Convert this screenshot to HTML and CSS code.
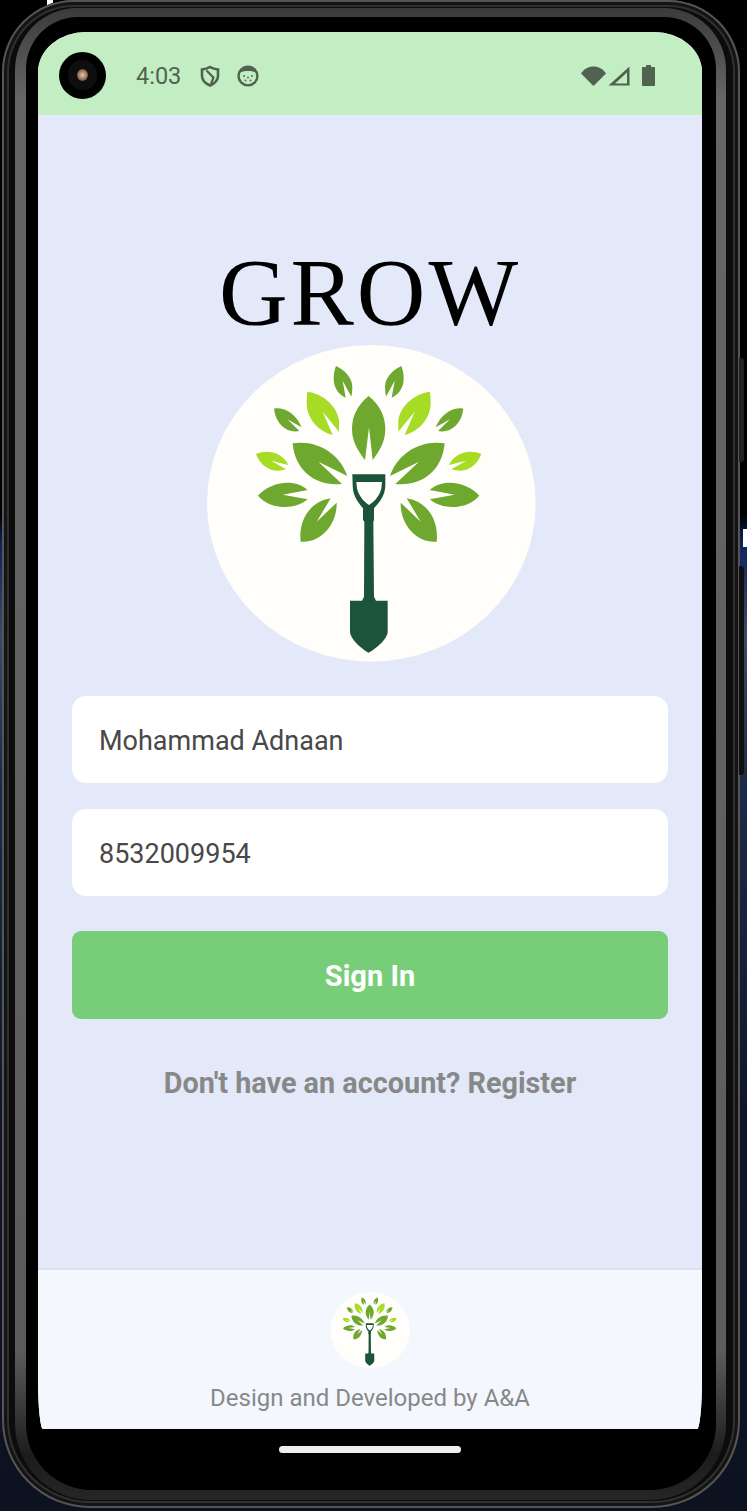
FILE: index.html
```html
<!DOCTYPE html>
<html lang="en">
<head>
    <meta charset="UTF-8">
    <meta name="viewport" content="width=device-width, initial-scale=1.0">
    <title>Grow - Sign In</title>
    <link rel="stylesheet" href="styles.css">
</head>
<body>

<!-- Logo, drawn once and reused in the footer -->
<svg class="defs" width="0" height="0" aria-hidden="true">
    <symbol id="growLogo" viewBox="0 0 1020 990" preserveAspectRatio="none">
        <ellipse cx="514" cy="490" rx="493" ry="475" fill="#fffefa"/>
        <g id="leavesLeft">
            <path class="leaf" d="M408 78C435 90 457 115 457 140C457 150 456 160 454 170L428 122L437 173C415 165 400 140 401 115C401 100 404 88 408 78Z"/>
            <path class="leaf-light" d="M322 155C365 160 410 195 417 240L417 275L368 215L398 285C355 275 320 235 320 190C320 175 321 165 322 155Z"/>
            <path class="leaf" d="M222 206C255 198 290 225 305 262L262 238L298 273C262 280 228 255 222 206Z"/>
            <path class="leaf" d="M278 310C350 298 420 340 442 408L355 365L426 432C350 440 285 395 278 310Z"/>
            <path class="leaf-light" d="M168 342C205 325 250 340 265 375L213 362L258 388C220 400 185 385 168 342Z"/>
            <path class="leaf" d="M174 467C205 430 280 410 323 450L248 464L323 478C280 515 205 505 174 467Z"/>
            <path class="leaf" d="M392 475L350 545L410 488C412 550 365 610 302 605C295 540 330 485 392 475Z"/>
        </g>
        <use href="#leavesLeft" transform="translate(1012 0) scale(-1 1)"/>
        <path class="leaf" d="M506 168C540 195 556 230 556 268C556 305 538 335 518 360L507 262L495 360C475 335 456 305 456 268C456 230 472 195 506 168Z"/>
        <path fill="#1c5439" fill-rule="evenodd" d="M457 403H556V435C556 465 540 485 522 505V540L520 545L522 770L528 782H563V875C563 895 530 925 506 938C482 925 450 895 450 875V782H486L492 770L493 545L489 540V505C472 485 458 465 458 435ZM469 426H546L544 445C540 465 525 485 507 495C490 485 475 465 471 445Z"/>
    </symbol>
</svg>

<div class="device">
    <span class="side-btn side-btn-power"></span>
    <span class="side-btn side-btn-volume"></span>

    <div class="ring">
        <div class="bezel">
            <div class="screen">

                <!-- Barra de status -->
                <header class="status-bar">
                    <span class="camera"><span class="lens"></span></span>
                    <span class="clock">4:03</span>
                    <svg class="icon-shield" viewBox="0 0 20 22">
                        <path d="M10 2C12.500 3.500 15 4.200 18 4.500V11C18 15.500 14.500 18.500 10 20.500C5.500 18.500 2 15.500 2 11V4.500C5 4.200 7.500 3.500 10 2Z" fill="none" stroke="#4f6350" stroke-width="2.600"/>
                        <path d="M6.500 5.500L13.500 12.500L11 19" fill="none" stroke="#4f6350" stroke-width="2.200"/>
                    </svg>
                    <svg class="icon-face" viewBox="0 0 22 22">
                        <circle cx="11" cy="11" r="9.400" fill="none" stroke="#4f6350" stroke-width="2.400"/>
                        <path d="M3.500 7.500C4.500 3.500 7.500 1.500 11 1.500C14.500 1.500 17.500 3.500 18.500 7.500C16 6.300 14 6 11 6C8 6 6 6.300 3.500 7.500Z" fill="#4f6350"/>
                        <circle cx="7" cy="11" r=".9" fill="#4f6350"/>
                        <circle cx="11" cy="12.500" r=".9" fill="#4f6350"/>
                        <circle cx="15" cy="11" r=".9" fill="#4f6350"/>
                        <circle cx="8.500" cy="15.500" r=".9" fill="#4f6350"/>
                        <circle cx="13.500" cy="15.500" r=".9" fill="#4f6350"/>
                    </svg>
                    <span class="status-right">
                        <svg class="icon-wifi" viewBox="0 0 25 20">
                            <path d="M0 7.500C3 3 7.500 .5 12.500 .5C17.500 .5 22 3 25 7.500L12.500 20Z" fill="#4f6350"/>
                        </svg>
                        <svg class="icon-signal" viewBox="0 0 22 20">
                            <path d="M21.500 .5V19.500H.5ZM19 6.500L7 17.500H19Z" fill="#4f6350" fill-rule="evenodd"/>
                        </svg>
                        <svg class="icon-battery" viewBox="0 0 13 21">
                            <path d="M4 0H9V2H12C12.600 2 13 2.400 13 3V20C13 20.600 12.600 21 12 21H1C.4 21 0 20.600 0 20V3C0 2.400 .4 2 1 2H4Z" fill="#4f6350"/>
                        </svg>
                    </span>
                </header>

                <!-- Formulario de login -->
                <main class="login">
                    <h1 class="brand">GROW</h1>
                    <svg class="logo"><use href="#growLogo"/></svg>

                    <div class="field">Mohammad Adnaan</div>
                    <div class="field field-phone">8532009954</div>
                    <button class="btn-signin">Sign In</button>
                    <a class="register-link" href="#">Don't have an account? Register</a>
                </main>

                <footer class="app-footer">
                    <svg class="footer-logo"><use href="#growLogo"/></svg>
                    <p class="credit">Design and Developed by A&amp;A</p>
                </footer>
            </div>

            <div class="home-area"><span class="home-bar"></span></div>
        </div>
    </div>
</div>

</body>
</html>
```

FILE: styles.css
```css
/* Estilos globais */
* {
    margin: 0;
    padding: 0;
    box-sizing: border-box;
}

body {
    width: 747px;
    height: 1511px;
    overflow: hidden;
    font-family: 'Roboto', sans-serif;
    background:
        linear-gradient(#fff, #fff) 47px 0 / 6px 6px no-repeat,
        linear-gradient(#fff, #fff) 743px 529px / 4px 18px no-repeat,
        linear-gradient(180deg, #000 0, #000 34%, #10245c 36%, #3c4a68 42%, #1c2a4a 52%, #0e1528 75%, #0c1220 100%);
}

.defs {
    position: absolute;
}

.leaf {
    fill: #6ea82f;
}

.leaf-light {
    fill: #a6dc26;
}

/* Moldura do aparelho */
.device {
    position: relative;
    width: 738px;
    height: 1508px;
    margin-left: 2px;
    padding: 8px 14px 8px 13px;
    background: #0c0c0c;
    border-radius: 72px 72px 88px 88px;
    box-shadow: inset 0 0 0 2px #555, inset 0 0 0 5px #141414, inset 0 0 0 7px #303030;
}

.side-btn {
    position: absolute;
    left: 737px;
    width: 5px;
    background: #222;
    border-radius: 0 3px 3px 0;
}

.side-btn-power {
    top: 358px;
    height: 104px;
}

.side-btn-volume {
    top: 566px;
    height: 209px;
    background: #111;
}

.ring {
    height: 100%;
    padding: 9px 10px 10px 11px;
    background: linear-gradient(180deg, #3a3a3a 0, #666 6%, #5c5c5c 90%, #1c1c1c 97%, #262626 100%);
    border-radius: 62px 62px 76px 76px;
}

.bezel {
    display: flex;
    flex-direction: column;
    height: 100%;
    padding: 15px 14px 0 12px;
    background: #000;
    border-radius: 52px 52px 66px 66px;
}

.screen {
    display: flex;
    flex-direction: column;
    height: 1397px;
    overflow: hidden;
    background: #e3e9f8;
    border-radius: 48px 48px 5px 5px / 40px 40px 50px 50px;
}

/* Barra de status */
.status-bar {
    display: flex;
    align-items: center;
    flex-shrink: 0;
    height: 83px;
    padding: 0 47px 0 21px;
    background: #c3eec3;
    color: #4f6350;
}

.camera {
    display: flex;
    align-items: center;
    justify-content: center;
    width: 47px;
    height: 47px;
    margin-top: 3px;
    background: #000;
    border-radius: 50%;
}

.lens {
    width: 11px;
    height: 12px;
    background: radial-gradient(circle, #e8c8a8 0, #8a6a58 60%, #222 100%);
    border-radius: 50%;
    box-shadow: 0 0 0 9px #0e0e0e;
}

.clock {
    margin-left: 30px;
    margin-top: 5px;
    font-size: 23.5px;
}

.icon-shield {
    width: 20px;
    height: 22px;
    margin-left: 19px;
    margin-top: 4px;
}

.icon-face {
    width: 22px;
    height: 22px;
    margin-left: 17px;
    margin-top: 4px;
}

.status-right {
    display: flex;
    align-items: center;
    margin-left: auto;
    margin-top: 4px;
}

.icon-wifi {
    width: 25px;
    height: 20px;
}

.icon-signal {
    width: 22px;
    height: 20px;
    margin-left: 2px;
}

.icon-battery {
    width: 13px;
    height: 21px;
    margin-left: 12px;
}

/* Formulario */
.login {
    display: flex;
    flex-direction: column;
    align-items: center;
    flex: 1;
    padding: 133px 34px 0;
}

.brand {
    font-family: 'Liberation Serif', serif;
    font-size: 95px;
    font-weight: 400;
    line-height: 90px;
    letter-spacing: 3px;
    color: #000;
}

.logo {
    width: 340px;
    height: 330px;
    margin: 2px 0 0 -1px;
}

.field {
    display: flex;
    align-items: center;
    width: 100%;
    height: 87px;
    margin-top: 26px;
    padding: 2px 0 0 27px;
    background: #fff;
    border-radius: 14px;
    font-size: 27px;
    color: #484848;
}

.btn-signin {
    width: 100%;
    height: 88px;
    margin-top: 35px;
    padding-top: 2px;
    background: #77cd78;
    border: none;
    border-radius: 9px;
    font-family: 'Roboto', sans-serif;
    font-size: 29px;
    font-weight: 700;
    color: #fff;
}

.register-link {
    margin-top: 47px;
    font-size: 28.8px;
    font-weight: 700;
    color: #888;
    text-decoration: none;
}

/* Rodape */
.app-footer {
    display: flex;
    flex-direction: column;
    align-items: center;
    flex-shrink: 0;
    height: 161px;
    padding-top: 21px;
    background: #f4f8fe;
    border-top: 2px solid #dce3ee;
}

.footer-logo {
    width: 82px;
    height: 79px;
}

.credit {
    margin-top: 14px;
    font-size: 24px;
    color: #888;
}

.home-area {
    display: flex;
    justify-content: center;
    padding-top: 17px;
}

.home-bar {
    width: 182px;
    height: 7px;
    background: #eee;
    border-radius: 4px;
}
```
